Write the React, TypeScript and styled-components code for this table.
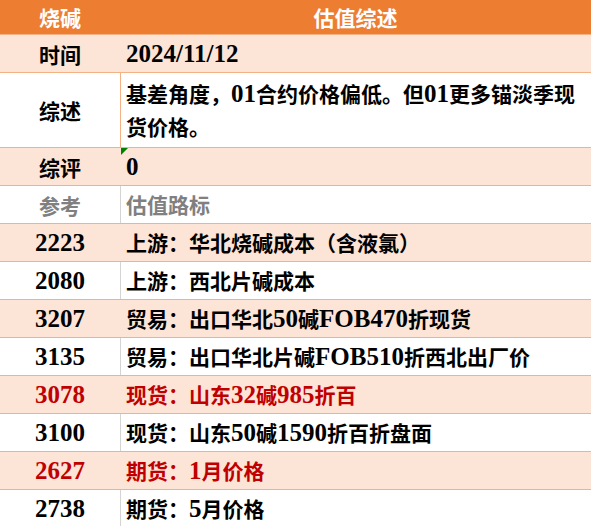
import styled, { createGlobalStyle } from "styled-components";

const GlobalStyle = createGlobalStyle`
  html, body {
    margin: 0;
    padding: 0;
    background: #ffffff;
  }
  body {
    font-family: "Noto Sans CJK SC", sans-serif;
  }
`

const Sheet = styled.div`
  width: 591px;
  display: flex;
  flex-direction: column;
`

const HeaderRow = styled.div`
  display: grid;
  grid-template-columns: 120px 1fr;
  height: 34px;
  background: #ed7d31;
  color: #ffffff;
  font-weight: 700;
  font-size: 21px;
  align-items: center;
  text-align: center;
`

const Row = styled.div<{ $fill?: boolean; $h?: number; $tone?: string; $line?: string }>`
  display: grid;
  grid-template-columns: 120px 1fr;
  height: ${(p) => p.$h || 37}px;
  border-top: 1px solid #f4b183;
  background: ${(p) => (p.$fill ? "#fce4d6" : "#ffffff")};
  color: ${(p) => p.$tone || "#000000"};
  font-weight: 700;
  font-size: 21px;
  .key {
    display: flex;
    align-items: center;
    justify-content: center;
  }
  .val {
    position: relative;
    display: flex;
    align-items: center;
    padding-left: 5px;
    border-left: 1px solid ${(p) => p.$line || (p.$fill ? "transparent" : "#d4d4d4")};
    line-height: 33px;
    white-space: nowrap;
  }
`

const Latin = styled.span`
  font-family: "Liberation Serif", serif;
  font-size: 25px;
  font-weight: 700;
`

const CommentMark = styled.span`
  position: absolute;
  left: 0;
  top: 0;
  width: 0;
  height: 0;
  border-top: 7px solid #008000;
  border-right: 7px solid transparent;
`

// split text into latin runs (serif) and CJK runs
function Mixed({ text }: { text: string }) {
  const parts = text.split(/([A-Za-z0-9\/.]+)/).filter(Boolean)
  return (
    <>
      {parts.map((p, i) => (/^[A-Za-z0-9\/.]+$/.test(p) ? <Latin key={i}>{p}</Latin> : <span key={i}>{p}</span>))}
    </>
  )
}

const rows = [
  { k: "2223", v: "上游：华北烧碱成本（含液氯）", fill: true },
  { k: "2080", v: "上游：西北片碱成本" },
  { k: "3207", v: "贸易：出口华北50碱FOB470折现货", fill: true },
  { k: "3135", v: "贸易：出口华北片碱FOB510折西北出厂价" },
  { k: "3078", v: "现货：山东32碱985折百", fill: true, red: true },
  { k: "3100", v: "现货：山东50碱1590折百折盘面" },
  { k: "2627", v: "期货：1月价格", fill: true, red: true },
  { k: "2738", v: "期货：5月价格" },
]

export default function App() {
  return (
    <Sheet>
      <GlobalStyle />
      <HeaderRow>
        <div>烧碱</div>
        <div>估值综述</div>
      </HeaderRow>
      <Row $fill>
        <div className="key">时间</div>
        <div className="val"><Mixed text="2024/11/12" /></div>
      </Row>
      <Row $h={74} $line="#f4b183">
        <div className="key">综述</div>
        <div className="val">
          <span>
            <Mixed text="基差角度，01合约价格偏低。但01更多锚淡季现" />
            <br />
            货价格。
          </span>
        </div>
      </Row>
      <Row $fill>
        <div className="key">综评</div>
        <div className="val">
          <CommentMark />
          <Latin>0</Latin>
        </div>
      </Row>
      <Row $tone="#808080">
        <div className="key">参考</div>
        <div className="val">估值路标</div>
      </Row>
      {rows.map((r) => (
        <Row key={r.k} $fill={r.fill} $tone={r.red ? "#c00000" : undefined}>
          <div className="key"><Latin>{r.k}</Latin></div>
          <div className="val"><Mixed text={r.v} /></div>
        </Row>
      ))}
    </Sheet>
  )
}
